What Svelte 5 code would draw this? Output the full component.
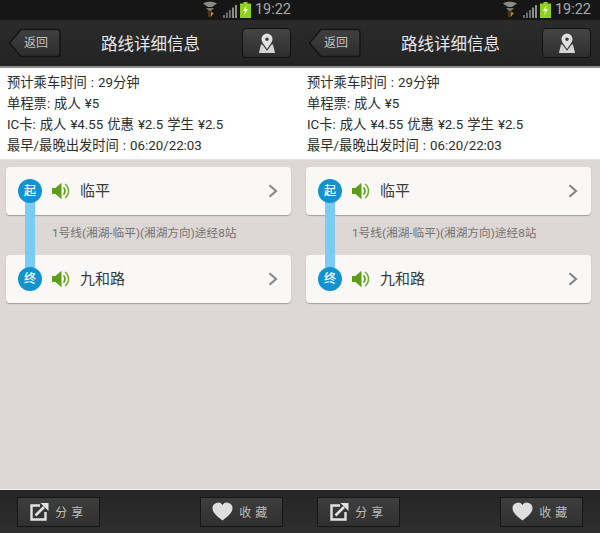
<script>
  const panels = [0, 1];
  const info = [
    '预计乘车时间 : 29分钟',
    '单程票: 成人 ¥5',
    'IC卡: 成人 ¥4.55 优惠 ¥2.5 学生 ¥2.5',
    '最早/最晚出发时间 : 06:20/22:03'
  ];
</script>

{#snippet speaker()}
  <svg class="speaker" width="20" height="20" viewBox="0 0 20 20">
    <path d="M1 7h3.400L10.500 1.800v16.400L4.400 13H1z" fill="#5f9c1e" />
    <path d="M12.400 6.400a4.800 4.800 0 0 1 0 7.200" fill="none" stroke="#5f9c1e" stroke-width="1.700" />
    <path d="M14 3a8.800 8.800 0 0 1 0 14" fill="none" stroke="#6da82c" stroke-width="1.500" />
  </svg>
{/snippet}

{#snippet chevron()}
  <svg class="chevron" width="10" height="14" viewBox="0 0 10 14">
    <path d="M1.500 1.200 8 7l-6.500 5.800" fill="none" stroke="#85898b" stroke-width="2.200" />
  </svg>
{/snippet}

<div class="screen">
  {#each panels as p (p)}
    <section class="panel">
      <div class="status">
        <svg class="notif" width="16" height="18" viewBox="0 0 16 18">
          <path d="M1 3.500C4 1.200 11 1.200 15 3.500L10 7H6z" fill="#8b8b85" />
          <path d="M4 8h8l-3 3H7z" fill="#77776f" />
          <path d="M5.500 11h4l-1 6h-2.500z" fill="#4b3318" />
          <path d="M9.500 11.500l2 2-3 3.500z" fill="#c9a227" />
        </svg>
        <svg class="signal" width="14" height="14" viewBox="0 0 14 14">
          <path d="M0 11h2v3H0zM3 8.500h2V14H3zM6 6h2v8H6z" fill="#6a6a6a" />
          <path d="M9 3.500h2V14H9zM12 1h2v13h-2z" fill="#8e8e8e" />
        </svg>
        <svg class="battery" width="11" height="16" viewBox="0 0 11 16">
          <path d="M3.500 0h4v1.500h3.500V16H0V1.500h3.500z" fill="#8fd11d" />
          <path d="M6.500 3 3 9h2.300L4 13.500 8 7H5.600z" fill="#f3fbe2" />
        </svg>
        <span class="clock">19:22</span>
      </div>

      <header class="topbar">
        <div class="back">
          <svg class="backshape" width="53" height="30" viewBox="0 0 53 30">
            <defs>
              <linearGradient id={`bk${p}`} x1="0" y1="0" x2="0" y2="1">
                <stop offset="0" stop-color="#414141" />
                <stop offset="1" stop-color="#2c2c2c" />
              </linearGradient>
            </defs>
            <path d="M13 1.500H49a3 3 0 0 1 3 3v21a3 3 0 0 1-3 3H13L1.500 15z" fill={`url(#bk${p})`} stroke="#141414" stroke-width="1.500" />
          </svg>
          <span class="backtext">返回</span>
        </div>
        <h1>路线详细信息</h1>
        <div class="mapbtn">
          <svg width="20" height="21" viewBox="0 0 18 19">
            <path fill-rule="evenodd" d="M9 .5a5 5 0 0 1 5 5c0 1.900-1.200 3.700-2.300 5.200L9 14.500 6.300 10.700C5.200 9.200 4 7.400 4 5.500a5 5 0 0 1 5-5zM9 4a1.600 1.600 0 1 0 0 3.200A1.600 1.600 0 0 0 9 4z" fill="#e0e0e0" />
            <path d="M3.600 10.500h1.200L9 16l4.200-5.500h1.200l1.900 7.500H1.700z" fill="#d4d4d4" />
          </svg>
        </div>
      </header>

      <div class="info">
        {#each info as line}
          <p>{line}</p>
        {/each}
      </div>

      <main class="route">
        <div class="track"></div>
        <div class="stop">
          <span class="badge">起</span>
          {@render speaker()}
          <span class="name">临平</span>
          {@render chevron()}
        </div>
        <p class="note">1号线(湘湖-临平)(湘湖方向)途经8站</p>
        <div class="stop">
          <span class="badge">终</span>
          {@render speaker()}
          <span class="name">九和路</span>
          {@render chevron()}
        </div>
      </main>

      <footer class="bottombar">
        <div class="action">
          <svg width="19" height="19" viewBox="0 0 19 19">
            <path d="M10 3.500H1.500v14h14V10" fill="none" stroke="#e2e2e2" stroke-width="2.400" />
            <path d="M5.500 13.500 14 5" fill="none" stroke="#e2e2e2" stroke-width="2.600" />
            <path d="M10.500 1h8v8z" fill="#e2e2e2" />
          </svg>
          <span>分 享</span>
        </div>
        <div class="action">
          <svg width="21" height="19" viewBox="0 0 21 19">
            <path d="M10.500 18.500C4.500 14 .5 10.500.5 6A5.500 5.500 0 0 1 10.500 3a5.500 5.500 0 0 1 10 3c0 4.500-4 8-10 12.500z" fill="#dedede" />
          </svg>
          <span>收 藏</span>
        </div>
      </footer>
    </section>
  {/each}
</div>

<style>
  :global(body) {
    margin: 0;
    background: #ddd7d6;
  }
  .screen {
    display: flex;
    width: 600px;
    height: 533px;
    overflow: hidden;
    font-family: "Roboto", "Noto Sans CJK SC", sans-serif;
  }
  .panel {
    width: 300px;
    height: 533px;
    display: flex;
    flex-direction: column;
    background-color: #ddd7d6;
  }
  .status {
    height: 20px;
    flex: none;
    box-sizing: border-box;
    background: #161616;
    display: flex;
    align-items: center;
    justify-content: flex-end;
    padding-right: 9px;
  }
  .notif { margin-right: 5px; margin-top: -2px; }
  .signal { margin-right: 3px; margin-top: 1px; }
  .battery { margin-right: 4px; }
  .clock {
    color: #a8a8a8;
    font-size: 14.500px;
    line-height: 20px;
  }
  .topbar {
    height: 48px;
    flex: none;
    box-sizing: border-box;
    background: linear-gradient(#2b2b2b, #232323);
    border-bottom: 2px solid #8e8e8e;
    display: flex;
    align-items: center;
    padding: 0 9px 0 8px;
  }
  .back {
    width: 53px;
    height: 30px;
    position: relative;
    color: #c4c4c4;
    font-size: 12px;
  }
  .backshape {
    position: absolute;
    left: 0;
    top: 0;
  }
  .backtext {
    position: absolute;
    left: 16px;
    top: 0;
    line-height: 30px;
    white-space: nowrap;
  }
  h1 {
    flex: 1;
    margin: 0;
    text-align: center;
    color: #e8e8e8;
    font-size: 16.500px;
    font-weight: 400;
    padding-right: 2px;
  }
  .mapbtn {
    width: 49px;
    height: 30px;
    box-sizing: border-box;
    border: 1px solid #111;
    border-radius: 4px;
    background: linear-gradient(#454545, #2d2d2d);
    display: flex;
    align-items: center;
    justify-content: center;
  }
  .info {
    height: 92px;
    flex: none;
    box-sizing: border-box;
    background: #fff;
    padding: 5.400px 0 0 7px;
    border-bottom: 1px solid #e8e4e2;
  }
  .info p {
    margin: 0;
    color: #2c2c2c;
    font-size: 13.300px;
    line-height: 20.800px;
    word-spacing: 0.700px;
    white-space: nowrap;
  }
  .route {
    flex: 1;
    padding: 7px 9px 0 6px;
    position: relative;
  }
  .track {
    position: absolute;
    left: 25px;
    top: 30px;
    width: 10px;
    height: 88px;
    background: #79cdf5;
    z-index: 1;
  }
  .stop {
    height: 48px;
    box-sizing: border-box;
    background: #f9f8f7;
    border-radius: 4px;
    box-shadow: 0 1px 1px rgba(120, 110, 105, 0.55);
    display: flex;
    align-items: center;
    padding-left: 12px;
  }
  .badge {
    position: relative;
    z-index: 2;
    width: 24px;
    height: 24px;
    border-radius: 50%;
    background: #1492cf;
    color: #fff;
    font-size: 12px;
    font-weight: 500;
    line-height: 24px;
    text-align: center;
    flex: none;
  }
  .speaker {
    margin-left: 9px;
    flex: none;
  }
  .name {
    margin-left: 9px;
    margin-top: -4px;
    flex: 1;
    color: #3a3a3a;
    font-size: 15px;
  }
  .chevron {
    margin-right: 13px;
    flex: none;
  }
  .note {
    margin: 0;
    height: 40px;
    line-height: 37px;
    padding-left: 46px;
    color: #77716f;
    font-size: 11.700px;
    white-space: nowrap;
  }
  .bottombar {
    height: 44px;
    flex: none;
    box-sizing: border-box;
    background: linear-gradient(#252525, #2e2e2e);
    border-top: 1px solid #f4f0ee;
    display: flex;
    justify-content: space-between;
    align-items: center;
    padding: 0 17px;
  }
  .action {
    width: 83px;
    height: 30px;
    box-sizing: border-box;
    border: 1px solid #161616;
    background: linear-gradient(#3e3e3e, #303030);
    display: flex;
    align-items: center;
    justify-content: center;
    gap: 6px;
    color: #bdbdbd;
    font-size: 12px;
    letter-spacing: 0.500px;
    padding-right: 3px;
  }
</style>
